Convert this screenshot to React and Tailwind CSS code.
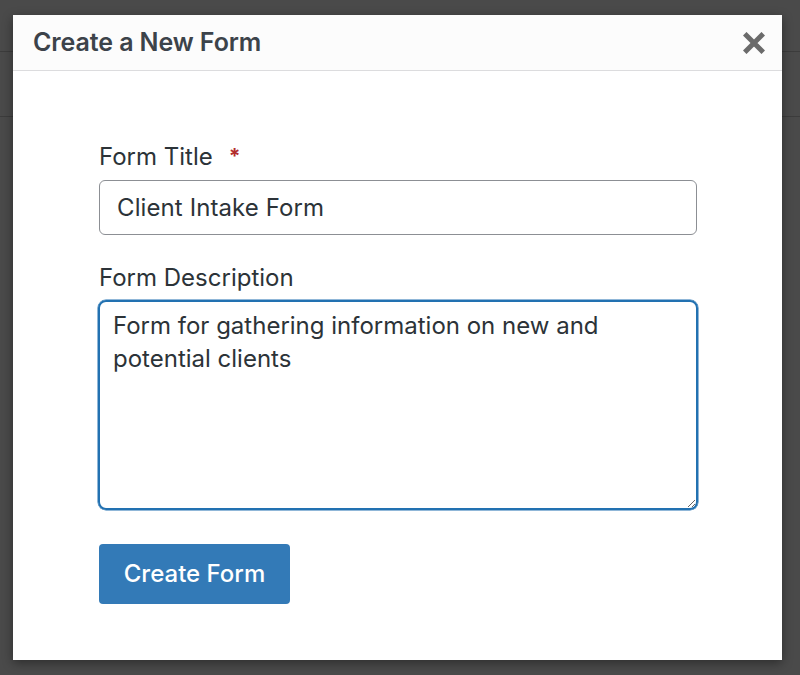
import React from "react";

export default function App() {
  return (
    <div className="relative w-[800px] h-[675px] overflow-hidden bg-[#4a4a4a]" style={{ fontFamily: "Inter, 'Noto Sans', sans-serif" }}>
      <div className="h-[52px] border-b border-[#3c3c3c]"></div>
      <div className="h-[65px] border-b border-[#3c3c3c]"></div>

      <div className="absolute left-[13px] top-[15px] w-[769px] h-[645px] bg-white shadow-[0_3px_10px_rgba(0,0,0,0.4)]">
        <div className="h-[56px] bg-[#fcfcfc] border-b border-[#dcdcde] flex items-center justify-between pl-[20px] pr-[15px]">
          <h1 className="text-[25px] font-semibold text-[#3c434a] tracking-[-0.1px]">Create a New Form</h1>
          <button className="w-[26px] h-[26px] flex items-center justify-center" aria-label="Close">
            <svg width="22" height="22" viewBox="0 0 22 22">
              <path d="M3.5 3.5 L18.5 18.5 M18.5 3.5 L3.5 18.5" stroke="#6b6b6b" strokeWidth="5" strokeLinecap="square" />
            </svg>
          </button>
        </div>

        <div className="px-[86px] pt-[71px] flex flex-col text-[#2c3338]">
          <label className="h-[30px] leading-[30px] text-[24px] flex items-center">
            Form Title
            <span className="ml-[16px] text-[#b32d2e] font-bold text-[21px]">*</span>
          </label>
          <input
            readOnly
            value="Client Intake Form"
            className="mt-[8px] h-[55px] w-[598px] rounded-[6px] border border-[#8c8f94] px-[17px] text-[24px] tracking-[0.1px] text-[#2c3338] outline-none"
            style={{ fontFamily: "Inter, 'Noto Sans', sans-serif" }}
          />
          <label className="mt-[28px] h-[30px] leading-[30px] text-[24px]">Form Description</label>
          <textarea
            readOnly
            value={"Form for gathering information on new and potential clients"}
            className="mt-[7px] h-[210px] w-[600px] -ml-[1px] rounded-[8px] border-2 border-[#2271b1] shadow-[0_0_0_0.5px_#2271b1] pl-[13px] pr-[80px] pt-[7px] text-[24px] leading-[33px] text-[#2c3338] outline-none"
            style={{ fontFamily: "Inter, 'Noto Sans', sans-serif" }}
          />
          <div>
            <button className="mt-[34px] h-[60px] w-[191px] rounded-[4px] bg-[#337ab7] text-white text-[24px] font-medium flex items-center justify-center">
              Create Form
            </button>
          </div>
        </div>
      </div>
    </div>
  );
}
